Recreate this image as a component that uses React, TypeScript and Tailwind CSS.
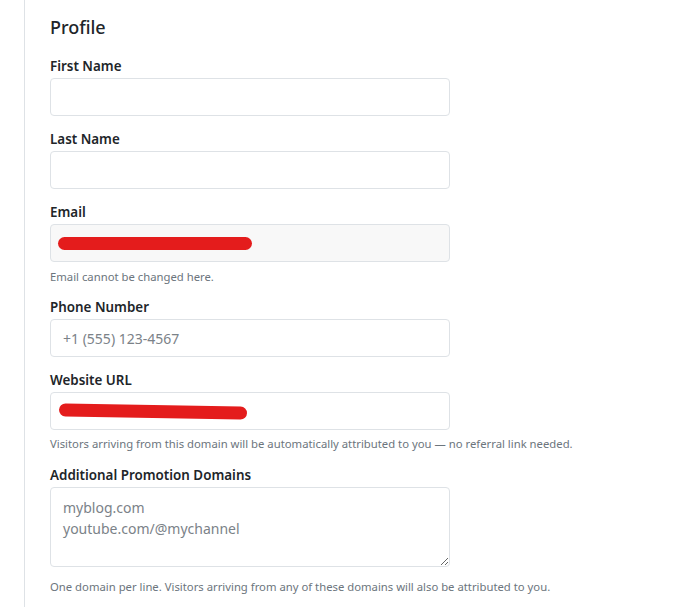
import React from "react"

function Redact({ className }: { className: string }) {
  return (
    <div
      className={`pointer-events-none absolute h-[13px] rounded-full bg-[#e41c1c] ${className}`}
    />
  )
}

const labelCls = "mb-[2px] block text-[13.4px] font-semibold leading-[20px]"
const inputCls =
  "block h-[38px] w-[400px] rounded-[4px] border border-[#dee2e6] px-3 text-[14px] outline-none placeholder:text-[#7b8288]"
const helpCls = "whitespace-nowrap text-[11.3px] leading-[16px] text-[#6c757d]"

export default function App() {
  return (
    <div
      className="flex min-h-[607px] bg-white text-[#212529]"
      style={{ fontFamily: '"Noto Sans", "Open Sans", sans-serif' }}
    >
      <div className="w-[25px] shrink-0 border-r border-[#dee2e6]" />
      <div className="w-[400px] shrink-0 pl-[25px] pt-[14px]">
        <h2 className="mb-[16px] text-[18px] font-medium leading-[26px]">Profile</h2>

        <div className="mb-[13px]">
          <label className={labelCls}>First Name</label>
          <input className={inputCls} />
        </div>

        <div className="mb-[13px]">
          <label className={labelCls}>Last Name</label>
          <input className={inputCls} />
        </div>

        <div className="mb-[12px]">
          <label className={labelCls}>Email</label>
          <div className="relative">
            <input disabled className={`${inputCls} bg-[#f8f8f8]`} />
            <Redact className="left-[8px] top-[13px] w-[194px]" />
          </div>
          <p className={`mt-[7px] ${helpCls}`}>Email cannot be changed here.</p>
        </div>

        <div className="mb-[13px]">
          <label className={labelCls}>Phone Number</label>
          <input placeholder="+1 (555) 123-4567" className={inputCls} />
        </div>

        <div className="mb-[13px]">
          <label className={labelCls}>Website URL</label>
          <div className="relative">
            <input className={inputCls} />
            <Redact className="left-[9px] top-[13px] w-[188px] rotate-[1deg]" />
          </div>
          <p className={`mt-[6px] ${helpCls}`}>
            Visitors arriving from this domain will be automatically attributed to you — no referral link needed.
          </p>
        </div>

        <div>
          <label className={labelCls}>Additional Promotion Domains</label>
          <textarea
            placeholder={"myblog.com\nyoutube.com/@mychannel"}
            className="block h-[80px] w-[400px] rounded-[4px] border border-[#dee2e6] px-3 py-[9px] text-[14px] leading-[21px] outline-none placeholder:text-[#7b8288]"
          />
          <p className={`mt-[12px] ${helpCls}`}>
            One domain per line. Visitors arriving from any of these domains will also be attributed to you.
          </p>
        </div>
      </div>
    </div>
  )
}
